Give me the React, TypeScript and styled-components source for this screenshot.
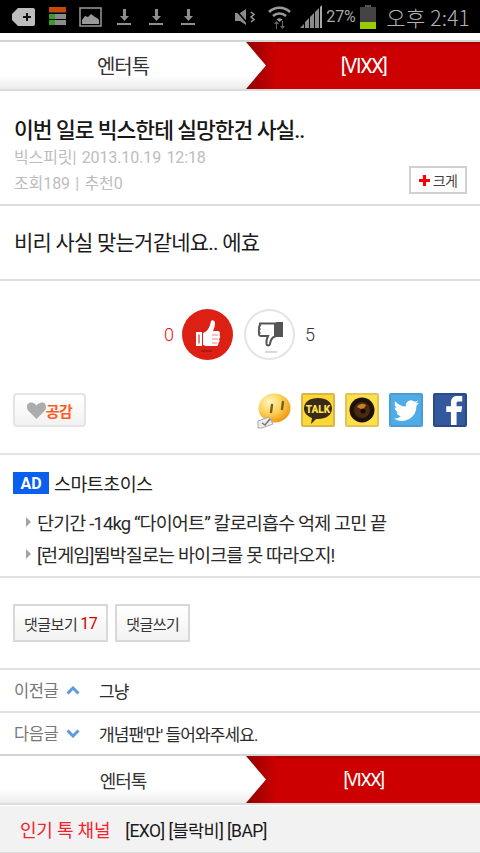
import styled, { createGlobalStyle } from 'styled-components';

const GlobalStyle = createGlobalStyle`
  html, body {
    margin: 0;
    padding: 0;
    background: #fff;
  }
  body {
    font-family: Roboto, "Noto Sans CJK KR", sans-serif;
    color: #222;
    overflow: hidden;
  }
  * { box-sizing: border-box; }
`;

const Page = styled.div`
  width: 480px;
  height: 853px;
  display: flex;
  flex-direction: column;
  overflow: hidden;
`;

const StatusBar = styled.div`
  height: 33px;
  background: #000;
  display: flex;
  align-items: center;
  padding: 0 10px 0 12px;
  flex-shrink: 0;
`;

const StatusLeft = styled.div`
  display: flex;
  align-items: center;
  gap: 13px;
  flex: 1;
`;

const StatusRight = styled.div`
  display: flex;
  align-items: center;
`;

const StatusGap = styled.span<{ $w: number }>`
  width: ${(p) => p.$w}px;
`;

const StatusPercent = styled.span`
  font-size: 16px;
  color: #a8a8a8;
  width: 30px;
  letter-spacing: -0.2px;
`;

const StatusClock = styled.span`
  font-family: "Noto Sans CJK KR", Roboto, sans-serif;
  font-size: 21px;
  font-weight: 300;
  color: #b4b4b4;
  margin-left: 10px;
  letter-spacing: 0.2px;
  white-space: nowrap;
`;

const NavBar = styled.div<{ $top: number }>`
  display: flex;
  height: 51px;
  margin-top: ${(p) => p.$top}px;
  border-top: 2px solid #d4d4d4;
  border-bottom: 2px solid #dcdcdc;
  flex-shrink: 0;
`;

const NavLeft = styled.div<{ $size: number }>`
  width: 246px;
  display: flex;
  align-items: center;
  justify-content: center;
  font-size: ${(p) => p.$size}px;
  letter-spacing: -1px;
  color: #333;
  background: linear-gradient(#fff 0, #fff 70%, #ececec 100%);
`;

const NavRight = styled.div<{ $size: number }>`
  flex: 1;
  position: relative;
  display: flex;
  align-items: center;
  justify-content: center;
  padding-left: 1px;
  background: linear-gradient(#a30000 0, #cc0000 4px);
  color: #fff;
  font-size: ${(p) => p.$size}px;
  letter-spacing: -1.4px;
  &::before {
    content: '';
    position: absolute;
    left: 0;
    top: 0;
    bottom: 0;
    width: 30px;
    background: linear-gradient(90deg, #8f0000, #cc0000);
  }
  &::after {
    content: '';
    position: absolute;
    left: 0;
    top: 0;
    bottom: 0;
    width: 20px;
    background: linear-gradient(#fff 0, #fff 70%, #ececec 100%);
    clip-path: polygon(0 0, 100% 50%, 0 100%);
  }
`;

const NavLabel = styled.span`
  position: relative;
  z-index: 1;
`;

const Article = styled.div`
  height: 115px;
  padding: 25px 13px 0 14px;
  border-bottom: 2px solid #dcdcdc;
  position: relative;
  flex-shrink: 0;
`;

const Title = styled.div`
  font-size: 21.5px;
  font-weight: 500;
  line-height: 29px;
  letter-spacing: -1px;
  color: #161616;
`;

const Meta = styled.div`
  font-size: 16px;
  line-height: 26px;
  color: #bdbdbd;
  letter-spacing: -0.1px;
  word-spacing: 1.5px;
  font-weight: 400;
  white-space: pre;
`;

const SizeButton = styled.div`
  position: absolute;
  right: 13px;
  bottom: 10px;
  width: 58px;
  height: 28px;
  border: 2px solid #d0d0d0;
  background: #fff;
  display: flex;
  align-items: center;
  justify-content: center;
  gap: 3px;
  font-size: 14px;
  letter-spacing: -0.6px;
  color: #444;
`;

const PlusMark = styled.span`
  width: 11px;
  height: 11px;
  background:
    linear-gradient(#f00, #f00) center / 11px 3px no-repeat,
    linear-gradient(#f00, #f00) center / 3px 11px no-repeat;
`;

const Body = styled.div`
  height: 75px;
  padding: 21px 14px 0;
  font-size: 21px;
  line-height: 32px;
  letter-spacing: -0.78px;
  color: #1c1c1c;
  border-bottom: 2px solid #dcdcdc;
  flex-shrink: 0;
`;

const VoteRow = styled.div`
  height: 98px;
  padding: 8px 0 0 164px;
  display: flex;
  align-items: center;
  flex-shrink: 0;
`;

const VoteCount = styled.span<{ $red?: boolean }>`
  font-size: 18px;
  font-weight: 300;
  width: 10px;
  color: ${(p) => (p.$red ? '#f01010' : '#333')};
`;

const VoteCircle = styled.div<{ $active?: boolean }>`
  width: 51px;
  height: 51px;
  border-radius: 50%;
  margin: 0 ${(p) => (p.$active ? '11px' : '10px')} 0 ${(p) => (p.$active ? '8px' : '0')};
  background: ${(p) => (p.$active ? '#dc2014' : '#fff')};
  box-shadow: ${(p) => (p.$active ? 'none' : 'inset 0 0 0 2px #e4e4e4')};
`;

const ShareRow = styled.div`
  height: 76px;
  padding: 14px 13px 0;
  display: flex;
  align-items: flex-start;
  justify-content: space-between;
  border-bottom: 2px solid #e4e4e4;
  flex-shrink: 0;
`;

const LikeButton = styled.div`
  width: 73px;
  height: 34px;
  border: 2px solid #e4e4e4;
  border-radius: 4px;
  background: linear-gradient(#fff, #f2f2f2);
  display: flex;
  align-items: center;
  justify-content: center;
  font-size: 15px;
  font-weight: 700;
  letter-spacing: -0.5px;
  color: #ff5a1e;
`;

const ShareIcons = styled.div`
  display: flex;
  gap: 10px;
  align-items: flex-start;
`;

const ShareTile = styled.div<{ $bg: string; $edge: string }>`
  width: 34px;
  height: 34px;
  border: 2px solid ${(p) => p.$edge};
  border-radius: 2px;
  background: ${(p) => p.$bg};
  display: flex;
  align-items: center;
  justify-content: center;
  overflow: hidden;
`;

const AdBlock = styled.div`
  height: 123px;
  padding: 17px 13px 0;
  border-bottom: 2px solid #e2e2e2;
  flex-shrink: 0;
`;

const AdHead = styled.div`
  display: flex;
  align-items: center;
  height: 22px;
  font-size: 18.5px;
  letter-spacing: -0.6px;
  color: #222;
  margin-bottom: 12px;
`;

const AdBadge = styled.span`
  width: 36px;
  height: 22px;
  background: #0a5ff0;
  color: #fff;
  font-weight: 700;
  font-size: 16px;
  letter-spacing: 0;
  display: flex;
  align-items: center;
  justify-content: center;
  margin-right: 5px;
`;

const AdLine = styled.div`
  display: flex;
  align-items: center;
  height: 32px;
  padding-left: 13px;
  font-size: 18.5px;
  letter-spacing: -0.88px;
  color: #2a2a2a;
  white-space: nowrap;
  &::before {
    content: '';
    width: 0;
    height: 0;
    border-left: 5px solid #a5a5a5;
    border-top: 5px solid transparent;
    border-bottom: 5px solid transparent;
    margin-right: 6px;
  }
`;

const ReplyRow = styled.div`
  height: 92px;
  padding: 26px 13px 0;
  display: flex;
  align-items: flex-start;
  gap: 7px;
  border-bottom: 2px solid #e2e2e2;
  flex-shrink: 0;
`;

const ReplyButton = styled.div`
  height: 38px;
  padding: 0 9px;
  border: 2px solid #d8d8d8;
  background: linear-gradient(#fff, #f2f2f2);
  display: flex;
  align-items: center;
  font-size: 15px;
  letter-spacing: -0.5px;
  color: #333;
`;

const ReplyCount = styled.em`
  font-style: normal;
  font-size: 16px;
  color: #d40000;
  margin-left: 3px;
`;

const PagerRow = styled.div<{ $last?: boolean }>`
  height: ${(p) => (p.$last ? '41px' : '43px')};
  display: flex;
  align-items: center;
  padding: 0 0 1px 14px;
  border-bottom: ${(p) => (p.$last ? 'none' : '2px solid #e2e2e2')};
  flex-shrink: 0;
`;

const PagerLabel = styled.span`
  width: 52px;
  font-size: 16.5px;
  letter-spacing: -0.4px;
  color: #777;
`;

const PagerArrow = styled.span`
  width: 33px;
  display: flex;
  align-items: center;
`;

const PagerText = styled.span`
  font-size: 17px;
  letter-spacing: -0.88px;
  color: #2b2b2b;
`;

const Footer = styled.div`
  height: 47px;
  margin-top: 1px;
  background: #f2f2f2;
  border-bottom: 1px solid #e0e0e0;
  display: flex;
  align-items: center;
  padding-left: 20px;
  flex-shrink: 0;
`;

const FooterTitle = styled.span`
  font-size: 18px;
  letter-spacing: -0.2px;
  color: #f5222d;
  margin-right: 15px;
`;

const FooterLinks = styled.span`
  font-size: 17.5px;
  letter-spacing: -0.55px;
  color: #1a1a1a;
`;

const Notification = () => (
  <StatusLeft>
    <svg width="24" height="20" viewBox="0 0 24 20">
      <path d="M6 1h15a2 2 0 0 1 2 2v14a2 2 0 0 1-2 2H6l-6-6V7z" fill="#bdbdbd" />
      <path d="M11 9h3V6h2v3h3v2h-3v3h-2v-3h-3z" fill="#111" />
    </svg>
    <svg width="17" height="19" viewBox="0 0 17 19">
      <rect width="17" height="5" y="0" fill="#c94a06" />
      <rect width="17" height="1" y="5" fill="#333" />
      <rect width="6" height="5" y="7" fill="#3a9a2a" />
      <rect x="6" width="11" height="5" y="7" fill="#8c8c8c" />
      <rect width="6" height="5" y="13" fill="#3a9a2a" />
      <rect x="6" width="11" height="5" y="13" fill="#8c8c8c" />
    </svg>
    <svg width="23" height="20" viewBox="0 0 23 20">
      <rect x="1" y="1" width="21" height="18" fill="none" stroke="#999" strokeWidth="1.5" />
      <path d="M3 17v-4l3-4 3 1 3-3 4 3 2 1 2 2v4z" fill="#999" />
    </svg>
    {[0, 1, 2].map((i) => (
      <svg key={i} width="19" height="18" viewBox="0 0 19 18">
        <path d="M8 1h3v7h3l-4.500 5L5 8h3z" fill="#8e8e8e" />
        <rect x="2" y="15" width="14" height="2" fill="#8e8e8e" />
      </svg>
    ))}
  </StatusLeft>
);

const StatusIcons = () => (
  <StatusRight>
    <svg width="24" height="20" viewBox="0 0 24 20">
      <path d="M1 6h5l6-4v16l-6-4H1z" fill="#8c8c8c" />
      <path d="M1 2l14 16" stroke="#000" strokeWidth="1.500" />
      <path d="M17 5l3 2.500-3 2.500 3 2.500-3 2.500" stroke="#9a9a9a" strokeWidth="1.500" fill="none" />
    </svg>
    <StatusGap $w={9} />
    <svg width="25" height="24" viewBox="0 0 25 24">
      <path d="M2 7a15 15 0 0 1 21 0" stroke="#9a9a9a" strokeWidth="2.500" fill="none" />
      <path d="M6 11a9.500 9.500 0 0 1 13 0" stroke="#9a9a9a" strokeWidth="2.500" fill="none" />
      <path d="M9.500 14.500a4.500 4.500 0 0 1 6 0L12.500 17z" fill="#9a9a9a" />
      <path d="M9 24v-5H7l2.500-3 2.500 3h-2v5zM15 16v5h-2l2.500 3 2.500-3h-2v-5z" fill="#666" />
    </svg>
    <StatusGap $w={8} />
    <svg width="23" height="23" viewBox="0 0 23 23">
      <path d="M0 23l4-4v4zM5 23v-6l4-4v10zM10 23V12l4-4v15zM15 23V7l4-4v20z" fill="#8a8a8a" />
      <path d="M20 23V2l2-2v23z" fill="#a8a8a8" />
    </svg>
    <StatusGap $w={3} />
    <StatusPercent>27%</StatusPercent>
    <StatusGap $w={4} />
    <svg width="16" height="24" viewBox="0 0 16 24">
      <rect x="5" y="0" width="6" height="2" fill="#555" />
      <rect x="0" y="2" width="16" height="15" fill="#444" />
      <rect x="0" y="17" width="16" height="7" fill="#99cc00" />
    </svg>
    <StatusClock>오후 2:41</StatusClock>
  </StatusRight>
);

const ThumbUp = () => (
  <svg width="51" height="51" viewBox="0 0 51 51">
    <path d="M14 23h6v14h-6z" fill="#fff" />
    <path d="M16 25.500h2v9h-2z" fill="#e8857c" />
    <path
      d="M21 24c3-1 6-4 7-8l1-4c2-2 4 0 4 2 0 3-1 6-2 8h5c2 0 2.500 3 1.500 4 1 1 1 3-.5 4 1 1 .5 3-.5 4 0 2-1 3-2 3H24c-1 0-2-1-3-1z"
      fill="#fff"
    />
    <path d="M30 26h6M30 30h6M30 34h5" stroke="#e8857c" strokeWidth="1.200" />
    <rect x="19" y="41" width="11" height="2" fill="#b01a10" />
  </svg>
);

const ThumbDown = () => (
  <svg width="51" height="51" viewBox="0 0 51 51">
    <path
      d="M16 14.500h15v13c-3 1-4.500 4-5 7.500-.5 2-3 2-3.500 0-.5-3 .5-6 1.500-8h-7c-2 0-2.500-2-1.500-3-1-1-1-3 0-4-1-1-.5-3 .5-3.500-.5-1 0-2 0-2z"
      fill="#fff"
      stroke="#555"
      strokeWidth="2"
    />
    <rect x="32" y="13" width="7" height="15" fill="#555" />
    <rect x="21" y="42" width="12" height="2" fill="#d8d8d8" />
  </svg>
);

const Heart = () => (
  <svg width="19" height="17" viewBox="0 0 19 17">
    <path d="M9.500 17L1.500 9C-1 6-.500 2 2 1s5-.5 7.500 2.500C12 .5 15 0 17 1s3 5 .5 8z" fill="#acacac" />
  </svg>
);

const Emoticon = () => (
  <svg width="34" height="36" viewBox="0 0 34 36">
    <defs>
      <radialGradient id="face" cx="35%" cy="30%" r="75%">
        <stop offset="0" stopColor="#fff6c0" />
        <stop offset="0.55" stopColor="#fbcf50" />
        <stop offset="1" stopColor="#ee9410" />
      </radialGradient>
    </defs>
    <ellipse cx="17.500" cy="15" rx="16" ry="14.500" fill="url(#face)" />
    <path d="M15 12l-1 7M26 9l-1 7" stroke="#7a5a20" strokeWidth="2.400" strokeLinecap="round" />
    <path d="M1 28l11-4 4 7-11 4H1z" fill="#ececec" stroke="#aaa" />
    <path d="M5 30l3 2 5-6" stroke="#777" strokeWidth="1.500" fill="none" />
  </svg>
);

const TalkBubble = () => (
  <svg width="30" height="30" viewBox="0 0 30 30">
    <path d="M15 3c8 0 14 4 14 10.500S23 24 15 24l-2 0-5 5 1-6C4 21 1 18 1 13.500 1 7 7 3 15 3z" fill="#3a2a1a" />
    <text x="15" y="17.500" textAnchor="middle" fontFamily="Roboto, sans-serif" fontSize="10" fontWeight="900" fill="#fde34a">
      TALK
    </text>
  </svg>
);

const CameraLens = () => (
  <svg width="26" height="26" viewBox="0 0 26 26">
    <circle cx="13" cy="13" r="12.500" fill="#1e120a" />
    <circle cx="13" cy="13" r="8" fill="#4a2a10" />
    <path d="M8 10a6 6 0 0 1 9-2l-3 5z" fill="#c9802c" />
    <circle cx="14" cy="14" r="2.500" fill="#140a04" />
  </svg>
);

const TwitterBird = () => (
  <svg width="25" height="21" viewBox="0 0 24 20">
    <path
      d="M23.500 2.400c-.9.4-1.800.6-2.800.8 1-.6 1.800-1.500 2.100-2.700-.9.6-2 1-3.100 1.200A4.900 4.900 0 0 0 11.400 6.200C7.300 6 3.700 4 1.300 1 0 3.200.600 6.100 2.800 7.500c-.8 0-1.500-.2-2.200-.6 0 2.400 1.700 4.400 3.900 4.900-.7.2-1.500.2-2.200.1.600 2 2.400 3.400 4.600 3.400A9.900 9.900 0 0 1 0 17.800a14 14 0 0 0 21.500-12.400c1-.7 1.800-1.600 2-3z"
      fill="#fff"
    />
  </svg>
);

const FacebookF = () => (
  <svg width="30" height="30" viewBox="0 0 30 32" style={{ alignSelf: 'flex-end' }}>
    <path d="M16 32V18h-5v-6h5V8c0-5 3-7 7-7h5v6h-4c-2 0-2 1-2 2v3h6l-1 6h-5v14z" fill="#fff" />
  </svg>
);

const ChevronUp = () => (
  <svg width="14" height="9" viewBox="0 0 14 9">
    <path d="M1.500 7.500L7 2l5.500 5.500" stroke="#5b9be0" strokeWidth="3" fill="none" />
  </svg>
);

const ChevronDown = () => (
  <svg width="14" height="9" viewBox="0 0 14 9">
    <path d="M1.500 1.500L7 7l5.500-5.500" stroke="#5b9be0" strokeWidth="3" fill="none" />
  </svg>
);

const Nav = ({ top, left, right }: { top: number; left: number; right: number }) => (
  <NavBar $top={top}>
    <NavLeft $size={left}>엔터톡</NavLeft>
    <NavRight $size={right}>
      <NavLabel>[VIXX]</NavLabel>
    </NavRight>
  </NavBar>
);

export default function App() {
  return (
    <Page>
      <GlobalStyle />
      <StatusBar>
        <Notification />
        <StatusIcons />
      </StatusBar>
      <Nav top={7} left={20} right={20} />
      <Article>
        <Title>이번 일로 빅스한테 실망한건 사실..</Title>
        <Meta>빅스피릿| 2013.10.19 12:18</Meta>
        <Meta>조회189 | 추천0</Meta>
        <SizeButton>
          <PlusMark />
          크게
        </SizeButton>
      </Article>
      <Body>비리 사실 맞는거같네요.. 에효</Body>
      <VoteRow>
        <VoteCount $red>0</VoteCount>
        <VoteCircle $active>
          <ThumbUp />
        </VoteCircle>
        <VoteCircle>
          <ThumbDown />
        </VoteCircle>
        <VoteCount>5</VoteCount>
      </VoteRow>
      <ShareRow>
        <LikeButton>
          <Heart />
          공감
        </LikeButton>
        <ShareIcons>
          <Emoticon />
          <ShareTile $bg="#fdd835" $edge="#d9b64a">
            <TalkBubble />
          </ShareTile>
          <ShareTile $bg="#fde14a" $edge="#e4c25a">
            <CameraLens />
          </ShareTile>
          <ShareTile $bg="#50ace6" $edge="#4a9dd4">
            <TwitterBird />
          </ShareTile>
          <ShareTile $bg="#33589e" $edge="#2a4a88">
            <FacebookF />
          </ShareTile>
        </ShareIcons>
      </ShareRow>
      <AdBlock>
        <AdHead>
          <AdBadge>AD</AdBadge>
          스마트초이스
        </AdHead>
        <AdLine>단기간 -14kg “다이어트” 칼로리흡수 억제 고민 끝</AdLine>
        <AdLine>[런게임]뜀박질로는 바이크를 못 따라오지!</AdLine>
      </AdBlock>
      <ReplyRow>
        <ReplyButton>
          댓글보기<ReplyCount>17</ReplyCount>
        </ReplyButton>
        <ReplyButton>댓글쓰기</ReplyButton>
      </ReplyRow>
      <PagerRow>
        <PagerLabel>이전글</PagerLabel>
        <PagerArrow>
          <ChevronUp />
        </PagerArrow>
        <PagerText>그냥</PagerText>
      </PagerRow>
      <PagerRow $last>
        <PagerLabel>다음글</PagerLabel>
        <PagerArrow>
          <ChevronDown />
        </PagerArrow>
        <PagerText>개념팬'만' 들어와주세요.</PagerText>
      </PagerRow>
      <Nav top={0} left={18} right={18} />
      <Footer>
        <FooterTitle>인기 톡 채널</FooterTitle>
        <FooterLinks>[EXO] [블락비] [BAP]</FooterLinks>
      </Footer>
    </Page>
  );
}
